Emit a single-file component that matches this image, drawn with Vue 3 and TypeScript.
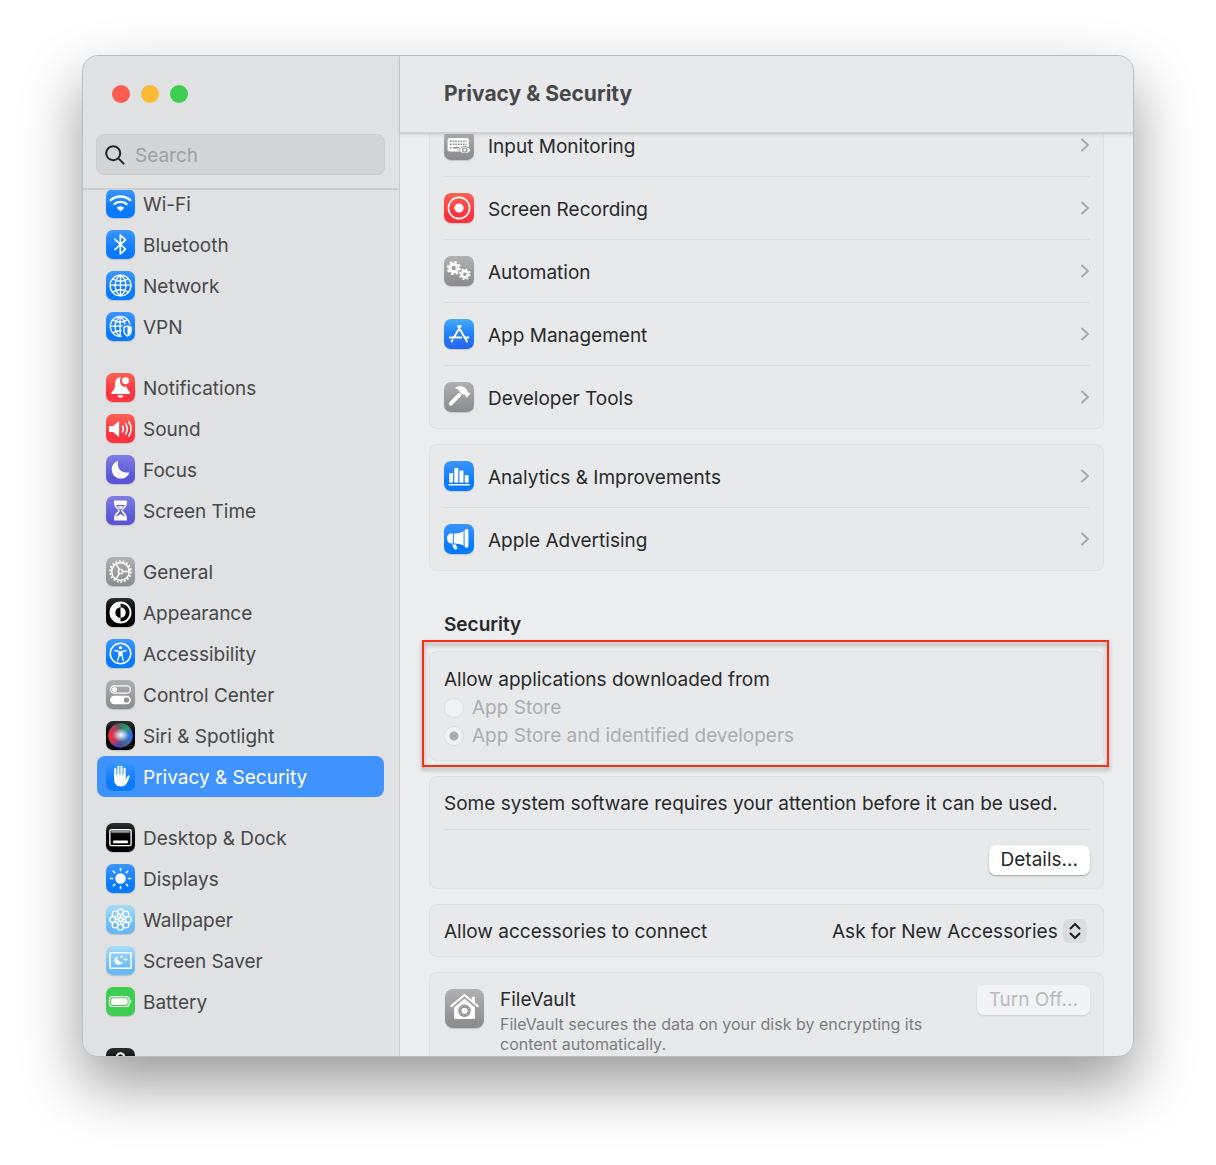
<script setup lang="ts">
import { onMounted, ref } from 'vue'

interface Item {
  label: string
  icon: string
  tone: string
}

const glyphs: Record<string, string> = {
  wifi: '<g fill="none" stroke="#fff" stroke-width="2.4"><path d="M4.2 12.2a15.4 15.4 0 0 1 21.6 0"/><path d="M8 16.2a10 10 0 0 1 14 0"/></g><path fill="#fff" d="M11 19.4a5.8 5.8 0 0 1 8 0L15 23.4z"/>',
  bluetooth: '<path fill="none" stroke="#fff" stroke-width="1.7" stroke-linejoin="round" stroke-linecap="round" d="M9.2 9.8l11 10-5.4 5V5.2l5.4 5-11 10"/>',
  globe: '<g fill="none" stroke="#fff" stroke-width="1.4"><circle cx="15" cy="15" r="10.8"/><path d="M15 4.2v21.6M4.2 14.6h21.6M7 8.2c5 3 11 3 16 0M7 21.8c5-3 11-3 16 0M15 4.2c-7.4 5.6-7.4 16 0 21.6M15 4.2c7.4 5.6 7.4 16 0 21.6"/></g>',
  vpn: '<g fill="none" stroke="#fff" stroke-width="1.4"><path d="M25 13a10.4 10.4 0 1 0-8.800 12.200"/><path d="M14.600 4.600v21M4.200 14.600h16M7 8.200c5 3 10 3 15 0M7 21.600c3-2 6-2.400 9-2.200M14.600 4.600c-7 5.600-7 15 0 20.800M14.600 4.600c3.200 2.400 4.800 5.400 5 8.400"/></g><path fill="#2286fd" d="M22.300 12.400l5.500 2v5c0 3.600-2.400 6-5.500 7.400-3.100-1.400-5.500-3.800-5.500-7.400v-5z"/><path fill="#fff" d="M22.300 13.800l4.300 1.500v4.100c0 3-1.800 5-4.300 6.200-2.500-1.200-4.300-3.200-4.300-6.200v-4.100z"/><path fill="#1b80fb" d="M22.300 15.200v9c-1.900-1-3-2.600-3-4.800v-3.200z"/>',
  bell: '<path fill="#fff" d="M15.400 4.200c-4.600.4-6 3.800-6 7.300 0 4.200-1 6-3 7.600-1.200 1-1.500 2.500.4 2.500h17c1.700 0 1.500-1.500.3-2.500-1.300-1.100-2.300-2.700-2.700-5.100-3 .9-6.600-1-6.900-4.800-.1-2 .3-3.600.9-5z"/><circle cx="20.200" cy="8" r="3.600" fill="#fff"/><path fill="#fff" d="M12 23h6c0 1.600-1.300 2.600-3 2.600S12 24.600 12 23z"/>',
  sound: '<path fill="#fff" d="M3.800 12.400h3.600l5.200-4.600c.5-.4 1-.2 1 .5v14.400c0 .7-.5.9-1 .5l-5.200-4.600H3.800c-.5 0-.8-.3-.8-.8v-4.600c0-.5.3-.8.800-.8z"/><g fill="none" stroke="#fff" stroke-width="1.600" stroke-linecap="round"><path d="M17 12.200c1.200 2 1.200 4.400 0 6.400M20.200 10c2.200 3.400 2.200 7.400 0 10.800M23.600 8c3 4.600 3 10.200 0 14.800"/></g>',
  moon: '<path fill="#fff" d="M12.600 6c-1.500 5 .6 13.600 11.600 12-1.600 4-4.700 6.400-8.600 6.400-5.400 0-9.600-4-9.600-9.400C6 10.800 8.600 7.300 12.600 6z"/>',
  hourglass: '<g fill="#fff"><path d="M8.400 4.600h13.200v2.600c0 4-3 5.600-4.600 7.800 1.600 2.200 4.600 3.800 4.600 7.800v2.600H8.400v-2.600c0-4 3-5.600 4.600-7.800-1.600-2.200-4.600-3.800-4.600-7.800z"/></g><path fill="#6462dd" d="M10.400 9.200h9.200c-.8 2-2.800 3.400-3.700 5.300v1.400c.6 2 3 3 3.900 5.600L15 18.800l-4.800 2.700c.9-2.600 3.300-3.600 3.900-5.600v-1.400c-.9-1.900-2.900-3.300-3.700-5.300z"/><path fill="#fff" d="M12 10.600h6L15 14z"/>',
  gear: '<g fill="none" stroke="#fff"><circle cx="15" cy="15" r="10.800" stroke-width="1.800" stroke-dasharray="1.900 1.870"/><circle cx="15" cy="15" r="9.200" stroke-width="1.600"/><circle cx="15" cy="15" r="2.200" stroke-width="1.500"/><path stroke-width="1.500" d="M17.200 15h7M13.900 13.100l-3.500-6M13.900 16.900l-3.500 6"/></g>',
  appearance: '<circle cx="15" cy="15" r="10.400" fill="none" stroke="#fff" stroke-width="2"/><path fill="#fff" d="M15 5a10 10 0 0 0 0 20v-4.600a5.400 5.400 0 0 1 0-10.800z"/><path fill="#fff" d="M15 9.600a5.400 5.400 0 0 1 0 10.800z"/>',
  access: '<circle cx="15" cy="15" r="10.600" fill="none" stroke="#fff" stroke-width="1.600"/><circle cx="15" cy="9" r="1.700" fill="#fff"/><path fill="none" stroke="#fff" stroke-width="1.500" stroke-linecap="round" stroke-linejoin="round" d="M9.400 12l4.200 1v4.200L12 22.400M20.600 12l-4.200 1v4.200l1.600 5.200"/><path fill="#fff" d="M13.200 12.600h3.600v5h-3.600z"/>',
  switches: '<rect x="4.800" y="6" width="20.400" height="7.600" rx="3.800" fill="none" stroke="#fff" stroke-width="1.200"/><circle cx="8.800" cy="9.800" r="2.600" fill="#fff"/><rect x="4.200" y="16.400" width="21.600" height="8.800" rx="4.400" fill="#fff"/><circle cx="21.200" cy="20.800" r="2.700" fill="#919195"/>',
  siri: '<defs><radialGradient id="orbL" cx="5%" cy="50%" r="55%"><stop offset="0" stop-color="#ff2438"/><stop offset=".5" stop-color="#e8304c" stop-opacity=".8"/><stop offset="1" stop-color="#ff2d4f" stop-opacity="0"/></radialGradient><radialGradient id="orbR" cx="95%" cy="55%" r="50%"><stop offset="0" stop-color="#1a6cf5"/><stop offset="1" stop-color="#2d8cff" stop-opacity="0"/></radialGradient><radialGradient id="orbG" cx="75%" cy="15%" r="35%"><stop offset="0" stop-color="#18a850"/><stop offset="1" stop-color="#18a860" stop-opacity="0"/></radialGradient><radialGradient id="orbB" cx="35%" cy="98%" r="40%"><stop offset="0" stop-color="#3838e0"/><stop offset="1" stop-color="#4040e0" stop-opacity="0"/></radialGradient><radialGradient id="orbC"><stop offset="0" stop-color="#fff"/><stop offset=".4" stop-color="#d8f4ff" stop-opacity=".7"/><stop offset="1" stop-color="#a8e4ff" stop-opacity="0"/></radialGradient></defs><circle cx="15" cy="15" r="12.600" fill="#565c64"/><circle cx="15" cy="15" r="12.600" fill="url(#orbG)"/><circle cx="15" cy="15" r="12.600" fill="url(#orbB)"/><circle cx="15" cy="15" r="12.600" fill="url(#orbL)"/><circle cx="15" cy="15" r="12.600" fill="url(#orbR)"/><ellipse cx="15.500" cy="14.500" rx="9" ry="7" fill="url(#orbC)"/>',
  hand: '<g fill="none" stroke="#fff" stroke-width="2.200" stroke-linecap="round"><path d="M9.600 15.500V7.400M12.800 14V4.900M16 14V4.900M19.200 15V7"/></g><path fill="#fff" d="M8.500 13h11.800v5l2-3.600c.7-1.100 2.400-.6 2 .9-.9 3.200-2 5.900-3.500 7.800-1.200 1.500-2.900 2.300-5.300 2.300-4.700 0-7-2.800-7-7.200z"/>',
  dock: '<rect x="4" y="7" width="22" height="16.400" rx="1.600" fill="none" stroke="#fff" stroke-width="1.400"/><path fill="#999" d="M5.500 8.400h19v1.800h-19z"/><rect x="7.400" y="18" width="15.200" height="3" rx=".6" fill="#fff"/>',
  sun: '<circle cx="15" cy="15" r="5.400" fill="#fff"/><path fill="none" stroke="#fff" stroke-width="1.600" stroke-linecap="round" d="M15 4.600v2.200M15 23.200v2.200M4.600 15h2.200M23.200 15h2.200M7.600 7.600l1.500 1.500M20.900 20.900l1.500 1.500M22.400 7.600l-1.500 1.500M9.100 20.900l-1.500 1.500"/>',
  flower: '<g fill="none" stroke="#fff" stroke-width="1.400"><circle cx="15" cy="7" r="3"/><circle cx="20.600" cy="9.400" r="3"/><circle cx="23" cy="15" r="3"/><circle cx="20.600" cy="20.600" r="3"/><circle cx="15" cy="23" r="3"/><circle cx="9.400" cy="20.600" r="3"/><circle cx="7" cy="15" r="3"/><circle cx="9.400" cy="9.400" r="3"/><circle cx="15" cy="15" r="1.900"/><path d="M15 10.200v2.900M15 16.900v2.900M10.200 15h2.900M16.900 15h2.900M11.600 11.600l2 2M16.400 16.400l2 2M18.400 11.600l-2 2M13.600 16.400l-2 2"/></g>',
  saver: '<rect x="4.200" y="7" width="21.600" height="16" fill="none" stroke="#fff" stroke-width="1.500"/><path fill="#fff" d="M12 10.600c-1 3 .6 6.400 5.400 5.800-.8 2-2.400 3-4.300 3-2.600 0-4.500-1.900-4.500-4.400 0-2 1.300-3.700 3.400-4.400zM16.200 9.200l.6 1.400 1.400.6-1.400.6-.6 1.400-.6-1.400-1.400-.6 1.400-.6zM20.200 11.600l.7 1.800 1.800.7-1.800.7-.7 1.800-.7-1.800-1.800-.7 1.800-.7z"/>',
  battery: '<rect x="3.600" y="10" width="20.400" height="10.200" rx="3.200" fill="none" stroke="#fff" stroke-width="1.200"/><rect x="5.300" y="11.700" width="17" height="6.800" rx="1.800" fill="#fff"/><path fill="#fff" d="M25.200 13.200c1.400.5 1.400 3.300 0 3.800z"/>',
  lock: '<path fill="none" stroke="#fff" stroke-width="2" d="M11.200 14V9.200a3.800 3.800 0 0 1 7.600 0V14"/><rect x="9" y="13" width="12" height="10" rx="2" fill="#fff"/>',
  keyboard: '<rect x="3.600" y="8" width="21.200" height="13.400" rx="2.200" fill="#fff"/><g fill="none" stroke="#909093" stroke-width="1.500" stroke-dasharray="1.700 .9"><path d="M6 11.200h16.600M6 14.200h16.600"/></g><path stroke="#909093" stroke-width="1.500" d="M6 17.800h1.700M9 17.800h6"/><path fill="#fff" stroke="#909093" d="M14.600 20.200c1.600-2.400 3.700-3.600 6.200-3.600s4.600 1.200 6.200 3.600c-1.600 2.400-3.700 3.400-6.200 3.400s-4.600-1-6.200-3.400z"/><circle cx="20.800" cy="20.100" r="2.100" fill="none" stroke="#909093" stroke-width="1.200"/>',
  record: '<circle cx="15" cy="15" r="10.600" fill="none" stroke="#fff" stroke-width="1.700"/><circle cx="15" cy="15" r="4.600" fill="#fff"/>',
  gears: '<g fill="none" stroke="#fff"><circle cx="9.700" cy="12" r="3.800" stroke-width="3.200"/><circle cx="9.700" cy="12" r="6" stroke-width="2.200" stroke-dasharray="2.400 2.312"/><circle cx="20.800" cy="18.200" r="3.100" stroke-width="2.600"/><circle cx="20.800" cy="18.200" r="4.900" stroke-width="1.900" stroke-dasharray="1.950 1.898"/></g>',
  appstore: '<g fill="none" stroke="#fff" stroke-width="2" stroke-linecap="round"><path d="M16.600 6.800L10 18.400M14 7l9 15.400M5.800 18.600h11.400M21.400 18.600h3M8.500 21l-.8 1.400"/></g>',
  hammer: '<path fill="none" stroke="#fff" stroke-width="4" stroke-linecap="round" d="M15.400 12.800L6.800 21.600"/><path fill="#fff" d="M10.600 6c3.600-2.400 8.200-2.400 10.800.2l1.600 1.600c.6.700.4 1.500.6 2.300l.7.700 1-.3 1.200 1.200-3.800 3.900-1.400-1.300.2-1-1-.9c-.8.1-1.600.2-2.300-.3l-3-3c-.9-1.400-2.200-2.600-4.600-3.100z"/>',
  chart: '<g fill="#fff"><rect x="5.200" y="12" width="3.900" height="9.800" rx=".8"/><rect x="10.300" y="7" width="4" height="14.800" rx=".8"/><rect x="15.500" y="9.400" width="4" height="12.400" rx=".8"/><rect x="20.700" y="14" width="3.900" height="7.800" rx=".8"/><rect x="4.600" y="23" width="21" height="1.500"/></g>',
  megaphone: '<g fill="#fff"><path d="M8.800 9.600H6.800C4.600 9.600 3 12 3 14.600s1.600 4.800 3.800 4.800h2z"/><path d="M9.800 9.600c4.400 0 7-.8 9.800-2.400v14.400c-2.800-1.500-5.400-2.200-9.800-2.200z"/><rect x="20.600" y="5" width="3.800" height="18.800" rx="1.700"/><path d="M8 20.600h3.800l1.400 3c.4 1-.4 1.800-1.400 1.800-1.200 0-1.800-.4-2.200-1.300z"/></g>',
  vault: '<g fill="#fff"><path d="M20.600 6h2.400v5.400l-2.400-2z"/><path d="M7 13.800l8-6.600 8 6.600v8.400c0 .6-.3.900-.9.900H7.900c-.6 0-.9-.3-.9-.9z"/></g><path fill="none" stroke="#a3a3a5" stroke-width="1" d="M5.600 14.600L15 6.800l9.400 7.800"/><path fill="none" stroke="#fff" stroke-width="1.600" stroke-linecap="round" stroke-linejoin="round" d="M4.800 13.200L15 4.600l10.200 8.600"/><circle cx="15" cy="16.800" r="3.600" fill="none" stroke="#8f8f92" stroke-width="2.400"/><circle cx="15" cy="16.800" r="3.600" fill="none" stroke="#c4c4c6" stroke-width="1" stroke-dasharray="1 1.827"/>',
}

const groups: Item[][] = [
  [
    { label: 'Wi-Fi', icon: 'wifi', tone: 'blue' },
    { label: 'Bluetooth', icon: 'bluetooth', tone: 'blue' },
    { label: 'Network', icon: 'globe', tone: 'blue' },
    { label: 'VPN', icon: 'vpn', tone: 'blue' },
  ],
  [
    { label: 'Notifications', icon: 'bell', tone: 'red' },
    { label: 'Sound', icon: 'sound', tone: 'red' },
    { label: 'Focus', icon: 'moon', tone: 'indigo' },
    { label: 'Screen Time', icon: 'hourglass', tone: 'indigo' },
  ],
  [
    { label: 'General', icon: 'gear', tone: 'gray' },
    { label: 'Appearance', icon: 'appearance', tone: 'black' },
    { label: 'Accessibility', icon: 'access', tone: 'blue' },
    { label: 'Control Center', icon: 'switches', tone: 'gray' },
    { label: 'Siri & Spotlight', icon: 'siri', tone: 'black' },
    { label: 'Privacy & Security', icon: 'hand', tone: 'blue' },
  ],
  [
    { label: 'Desktop & Dock', icon: 'dock', tone: 'black' },
    { label: 'Displays', icon: 'sun', tone: 'blue' },
    { label: 'Wallpaper', icon: 'flower', tone: 'sky' },
    { label: 'Screen Saver', icon: 'saver', tone: 'sky' },
    { label: 'Battery', icon: 'battery', tone: 'green' },
  ],
  [{ label: 'Lock Screen', icon: 'lock', tone: 'black' }],
]

const cards: Item[][] = [
  [
    { label: 'Input Monitoring', icon: 'keyboard', tone: 'gray' },
    { label: 'Screen Recording', icon: 'record', tone: 'red' },
    { label: 'Automation', icon: 'gears', tone: 'gray' },
    { label: 'App Management', icon: 'appstore', tone: 'store' },
    { label: 'Developer Tools', icon: 'hammer', tone: 'gray' },
  ],
  [
    { label: 'Analytics & Improvements', icon: 'chart', tone: 'blue' },
    { label: 'Apple Advertising', icon: 'megaphone', tone: 'blue' },
  ],
]

const selected = ref('Privacy & Security')
const query = ref('')
const source = ref('identified')
const accessories = ref('new')

const list = ref<HTMLElement | null>(null)
const detail = ref<HTMLElement | null>(null)

// Both panes open slightly scrolled down.
onMounted(() => {
  if (list.value) list.value.scrollTop = 7
  if (detail.value) detail.value.scrollTop = 21
})
</script>

<template>
  <div class="desktop">
    <div class="window">
      <aside class="sidebar">
        <div class="side-head">
          <div class="lights">
            <button class="light close" aria-label="Close"></button>
            <button class="light minimise" aria-label="Minimise"></button>
            <button class="light zoom" aria-label="Zoom"></button>
          </div>
          <label class="search">
            <svg viewBox="0 0 20 20" aria-hidden="true">
              <circle cx="8.200" cy="8.200" r="7" />
              <path d="M13.400 13.400l5.200 5.200" />
            </svg>
            <input v-model="query" type="text" placeholder="Search" aria-label="Search" />
          </label>
        </div>
        <nav ref="list" class="side-list">
          <ul v-for="(group, g) in groups" :key="g">
            <li v-for="item in group" :key="item.label">
              <a href="#" :class="{ active: item.label === selected }" @click.prevent="selected = item.label">
                <span class="tile" :class="item.tone">
                  <svg viewBox="0 0 30 30" aria-hidden="true" v-html="glyphs[item.icon]"></svg>
                </span>
                <span class="side-label">{{ item.label }}</span>
              </a>
            </li>
          </ul>
        </nav>
      </aside>

      <main class="pane">
        <header><h1>Privacy &amp; Security</h1></header>
        <div ref="detail" class="content">
          <div v-for="(card, c) in cards" :key="c" class="card">
            <button v-for="item in card" :key="item.label" class="row">
              <span class="tile" :class="item.tone">
                <svg viewBox="0 0 30 30" aria-hidden="true" v-html="glyphs[item.icon]"></svg>
              </span>
              <span class="row-label">{{ item.label }}</span>
              <svg class="chevron" viewBox="0 0 10 16" aria-hidden="true"><path d="M2 2.500L8 8l-6 5.500" /></svg>
            </button>
          </div>

          <h2>Security</h2>

          <div class="marked">
            <fieldset class="card downloads">
              <legend>Allow applications downloaded from</legend>
              <label><input v-model="source" type="radio" name="source" value="store" disabled />App Store</label>
              <label><input v-model="source" type="radio" name="source" value="identified" disabled />App Store and identified developers</label>
            </fieldset>
          </div>

          <div class="card attention">
            <p>Some system software requires your attention before it can be used.</p>
            <div class="actions"><button class="push">Details...</button></div>
          </div>

          <div class="card accessories">
            <label for="accessories">Allow accessories to connect</label>
            <span class="picker">
              <select id="accessories" v-model="accessories">
                <option value="new">Ask for New Accessories</option>
              </select>
              <svg viewBox="0 0 24 24" aria-hidden="true"><path d="M7.500 9.500L12 5l4.500 4.500M7.500 14.500L12 19l4.500-4.500" /></svg>
            </span>
          </div>

          <div class="card vault">
            <span class="tile large gray">
              <svg viewBox="0 0 30 30" aria-hidden="true" v-html="glyphs.vault"></svg>
            </span>
            <div class="vault-text">
              <h3>FileVault</h3>
              <p>FileVault secures the data on your disk by encrypting its content automatically.</p>
            </div>
            <button class="push" disabled>Turn Off...</button>
          </div>
        </div>
      </main>
    </div>
  </div>
</template>

<style>
body {
  margin: 0;
  background: #fff;
}
</style>

<style scoped>
* {
  box-sizing: border-box;
}

.desktop {
  display: flex;
  height: 100vh;
  padding: 55px 82px 108px;
  font-family: Inter, "Liberation Sans", sans-serif;
  font-size: 19px;
  line-height: 24px;
  color: #28292b;
  overflow: hidden;
}

button,
input,
select {
  font: inherit;
  color: inherit;
  margin: 0;
}

h1,
h2,
h3,
p,
ul {
  margin: 0;
  padding: 0;
}

.window {
  flex: 1;
  display: flex;
  min-width: 0;
  border: 1px solid #bbbcbe;
  border-radius: 16px;
  background: #ecedef;
  box-shadow: 0 27px 60px rgba(0, 0, 0, 0.4);
  overflow: hidden;
}

.sidebar {
  flex: none;
  display: flex;
  flex-direction: column;
  width: 317px;
  border-right: 1px solid #cbccce;
  background: #e0e1e3;
  color: #47484a;
}

.side-head {
  padding: 29px 14px 13px 13px;
  border-bottom: 2px solid #cdced0;
}

.lights {
  display: flex;
  gap: 11px;
  padding: 0 16px 31px;
}

.light {
  width: 18px;
  height: 18px;
  padding: 0;
  border: 0;
  border-radius: 50%;
}

.close { background: #fb5e51; }
.minimise { background: #fcba35; }
.zoom { background: #3dce51; }

.search {
  display: flex;
  align-items: center;
  gap: 10px;
  height: 41px;
  padding: 0 8px;
  border: 1px solid #cbccce;
  border-radius: 8px;
  background: #d3d4d6;
}

.search svg {
  flex: none;
  width: 20px;
  height: 20px;
  fill: none;
  stroke: #232426;
  stroke-width: 2;
  stroke-linecap: round;
}

.search input {
  flex: 1;
  min-width: 0;
  padding: 2px 0 0;
  border: 0;
  outline: 0;
  background: none;
}

.search input::placeholder {
  color: #a0a1a3;
  opacity: 1;
}

.side-list {
  flex: 1;
  min-height: 0;
  padding: 0 15px 20px 14px;
  overflow-y: auto;
  scrollbar-width: none;
}

.side-list ul {
  list-style: none;
}

.side-list ul + ul {
  margin-top: 20px;
}

.side-list a {
  display: flex;
  align-items: center;
  gap: 8px;
  height: 41px;
  padding: 0 9px;
  border-radius: 8px;
  color: inherit;
  text-decoration: none;
}

.side-list a.active {
  background: #4093ff;
  color: #fff;
}

.side-list .tile {
  width: 29px;
  height: 29px;
}

.side-label {
  padding-top: 2px;
}

.tile {
  flex: none;
  display: block;
  width: 30px;
  height: 30px;
  border-radius: 7px;
  box-shadow: 0 1px 1px rgba(0, 0, 0, 0.15);
  overflow: hidden;
}

.active .tile {
  box-shadow: none;
}

.tile svg {
  display: block;
  width: 100%;
  height: 100%;
}

.tile.large {
  width: 39px;
  height: 39px;
  border-radius: 8px;
}

.blue { background: linear-gradient(#3b96fd, #0a7afd 70%); }
.red { background: linear-gradient(#fb6254, #fd3340 70%); }
.indigo { background: linear-gradient(#7f7ee2, #5856d5 80%); }
.gray { background: linear-gradient(#b1b1b3, #8a8a8d); }
.black { background: linear-gradient(#2e2e30, #000 50%); }
.sky { background: linear-gradient(#a5dcf6, #68b8f4 80%); }
.green { background: #3dce51; }
.store { background: linear-gradient(#45acfb, #2081fb 50%, #2a62ee); }

.pane {
  flex: 1;
  display: flex;
  flex-direction: column;
  min-width: 0;
}

.pane header {
  position: relative;
  flex: none;
  padding: 24px 44px;
  border-bottom: 2px solid #cfd0d2;
  background: #e8e9eb;
  box-shadow: 0 1px 3px rgba(0, 0, 0, 0.1);
}

h1 {
  font-size: 21px;
  line-height: 28px;
  font-weight: 700;
  color: #47484a;
}

.content {
  flex: 1;
  display: flex;
  flex-direction: column;
  gap: 15px;
  min-height: 0;
  padding: 0 29px 29px;
  overflow-y: auto;
  scrollbar-width: none;
}

.card {
  flex: none;
  min-width: 0;
  margin: 0;
  padding: 0 13px 0 14px;
  border: 1px solid #dfe0e2;
  border-radius: 8px;
  background: #e8e9eb;
}

.row {
  display: flex;
  align-items: center;
  gap: 14px;
  width: 100%;
  height: 62px;
  padding: 0;
  border: 0;
  background: none;
  text-align: left;
}

.row + .row {
  height: 63px;
  border-top: 1px solid #dcdddf;
}

.row-label {
  flex: 1;
  padding-top: 3px;
}

.chevron {
  width: 10px;
  height: 16px;
  fill: none;
  stroke: #a8a9ab;
  stroke-width: 2;
  stroke-linecap: round;
  stroke-linejoin: round;
}

h2 {
  padding: 28px 15px 0;
  font-size: 19px;
  line-height: 22px;
  font-weight: 600;
}

.marked {
  position: relative;
}

.marked::after {
  content: "";
  position: absolute;
  inset: -11px -5px -6px -7px;
  border: 2px solid #fb2c14;
  filter: drop-shadow(0 3px 2px rgba(0, 0, 0, 0.35));
  pointer-events: none;
}

.downloads {
  display: flex;
  flex-direction: column;
  gap: 4px;
  padding: 15px 14px 12px;
}

.downloads legend {
  float: left;
  padding: 0;
  line-height: 25px;
}

.downloads label {
  display: flex;
  align-items: center;
  gap: 8px;
  color: #acadaf;
}

.downloads input {
  appearance: none;
  width: 20px;
  height: 20px;
  border: 1px solid #dedfe1;
  border-radius: 50%;
  background: #f1f2f3;
}

.downloads input:checked {
  background: radial-gradient(circle, #acadae 4px, #f1f2f3 5px);
}

.attention p {
  padding: 15px 0 13px;
  border-bottom: 1px solid #dcdddf;
}

.actions {
  display: flex;
  justify-content: flex-end;
  padding: 15px 0 13px;
}

.push {
  height: 30px;
  padding: 0 12px;
  border: 0;
  border-radius: 7px;
  background: #fff;
  box-shadow: 0 1px 2px rgba(0, 0, 0, 0.3);
  line-height: 28px;
}

.push:disabled {
  background: #f2f3f4;
  box-shadow: 0 1px 2px rgba(0, 0, 0, 0.12);
  color: #b9babc;
}

.accessories {
  display: flex;
  align-items: center;
  justify-content: space-between;
  height: 53px;
}

.accessories label {
  padding-top: 2px;
}

.picker {
  display: flex;
  align-items: center;
  gap: 5px;
  padding-right: 3px;
}

.picker select {
  appearance: none;
  padding: 2px 0 0;
  border: 0;
  background: none;
}

.picker svg {
  width: 24px;
  height: 24px;
  border-radius: 6px;
  background: #dbdcde;
  fill: none;
  stroke: #1d1e20;
  stroke-width: 2;
  stroke-linecap: round;
  stroke-linejoin: round;
}

.vault {
  display: flex;
  align-items: flex-start;
  gap: 16px;
  padding: 12px 13px 12px 15px;
}

.vault .tile {
  margin-top: 4px;
}

.vault-text {
  flex: 1;
  padding-top: 1px;
}

.vault-text h3 {
  font-size: 19px;
  line-height: 28px;
  font-weight: 400;
}

.vault-text p {
  font-size: 16px;
  line-height: 20px;
  color: #7c7d7f;
}
</style>
